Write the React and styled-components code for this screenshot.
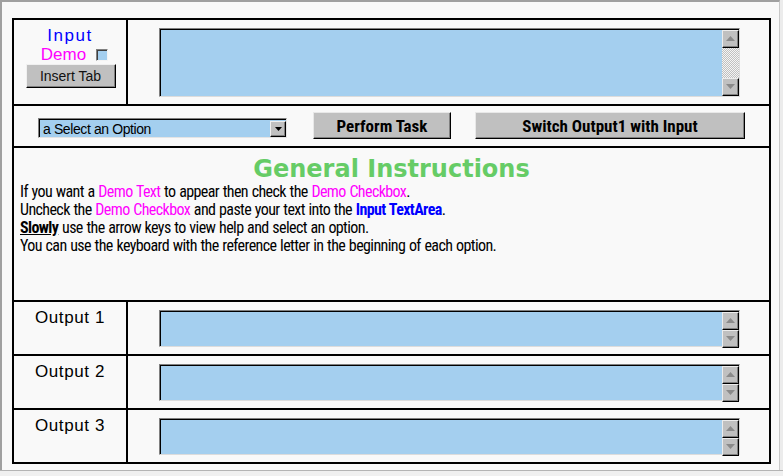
import styled, { createGlobalStyle } from 'styled-components';

const GlobalStyle = createGlobalStyle`
  html, body {
    margin: 0;
    padding: 0;
    background: #f9f9f9;
  }
  body {
    font-family: "Liberation Sans", Arial, sans-serif;
  }
`;

function Arrow({ up }) {
  return (
    <svg width="9" height="5" viewBox="0 0 9 5">
      <path d={up ? 'M4.5 0 L9 5 L0 5 Z' : 'M0 0 L9 0 L4.5 5 Z'} fill="#8a8a8a" />
    </svg>
  );
}

function FieldBox({ height, track }) {
  return (
    <TextBox $h={height}>
      <TextInput readOnly />
      <ScrollBar>
        <ScrollButton>
          <Arrow up />
        </ScrollButton>
        <Track $checker={track} />
        <ScrollButton>
          <Arrow />
        </ScrollButton>
      </ScrollBar>
    </TextBox>
  );
}

export default function App() {
  return (
    <>
      <GlobalStyle />
      <Window>
        <Viewport>
          <Sheet>
            <Row $h={86} $split>
              <LabelCell>
                <InputTitle>Input</InputTitle>
                <DemoLine>
                  Demo <CheckBox />
                </DemoLine>
                <SmallButton>Insert Tab</SmallButton>
              </LabelCell>
              <FieldCell>
                <FieldBox height={69} track />
              </FieldCell>
            </Row>

            <ControlRow>
              <SelectBox>
                <span>a Select an Option</span>
                <DropButton>
                  <svg width="7" height="4" viewBox="0 0 7 4">
                    <path d="M0 0 L7 0 L3.5 4 Z" fill="#000" />
                  </svg>
                </DropButton>
              </SelectBox>
              <TaskButton $w={138}>Perform Task</TaskButton>
              <TaskButton $w={270}>Switch Output1 with Input</TaskButton>
            </ControlRow>

            <InstructionRow>
              <Heading>General Instructions</Heading>
              <Help>
                <p>
                  If you want a <Pink>Demo Text</Pink> to appear then check the <Pink>Demo Checkbox</Pink>.
                </p>
                <p>
                  Uncheck the <Pink>Demo Checkbox</Pink> and paste your text into the <Blue>Input TextArea</Blue>.
                </p>
                <p>
                  <Strong>Slowly</Strong> use the arrow keys to view help and select an option.
                </p>
                <p>You can use the keyboard with the reference letter in the beginning of each option.</p>
              </Help>
            </InstructionRow>

            {[1, 2, 3].map((n) => (
              <Row key={n} $h={n === 3 ? 52 : 54} $split $last={n === 3}>
                <LabelCell>
                  <OutputLabel>Output {n}</OutputLabel>
                </LabelCell>
                <FieldCell>
                  <FieldBox height={37} />
                </FieldCell>
              </Row>
            ))}
          </Sheet>
        </Viewport>
        <StatusStrip />
      </Window>
    </>
  );
}

const narrow = `"Roboto Condensed", "DejaVu Sans Condensed", "Liberation Sans", Arial, sans-serif`;

const Window = styled.div`
  width: 783px;
  height: 476px;
  display: flex;
  flex-direction: column;
  background: #ececec;
  overflow: hidden;
`;

const Viewport = styled.div`
  height: 470px;
  width: 780px;
  box-sizing: border-box;
  background: #f9f9f9;
  border-top: 2px solid #a0a0a0;
  border-left: 2px solid #a0a0a0;
  border-right: 1px solid #c8c8c8;
  padding: 16px 0 0 10px;
`;

const StatusStrip = styled.div`
  height: 6px;
  box-sizing: border-box;
  border-top: 1px solid #b4b4b4;
  background: #f0f0f0;
`;

const Sheet = styled.div`
  width: 759px;
  height: 446px;
  box-sizing: border-box;
  border: 2px solid #000;
  display: flex;
  flex-direction: column;
`;

const Row = styled.div`
  display: grid;
  grid-template-columns: ${({ $split }) => ($split ? '114px 1fr' : '1fr')};
  height: ${({ $h }) => $h}px;
  flex: none;
  box-sizing: border-box;
  border-bottom: ${({ $last }) => ($last ? 'none' : '2px solid #000')};
`;

const LabelCell = styled.div`
  border-right: 2px solid #000;
  display: flex;
  flex-direction: column;
  align-items: center;
`;

const FieldCell = styled.div`
  display: flex;
  align-items: center;
  justify-content: center;
  padding-left: 1px;
`;

const InputTitle = styled.div`
  margin-top: 6px;
  font-size: 17px;
  line-height: 19px;
  letter-spacing: 1.5px;
  color: #0000ff;
`;

const DemoLine = styled.div`
  display: flex;
  align-items: center;
  gap: 10px;
  font-size: 17px;
  line-height: 19px;
  color: #ff00ff;
  margin-left: 9px;
`;

const CheckBox = styled.span`
  width: 12px;
  height: 12px;
  box-sizing: border-box;
  background: #a4cfef;
  border-top: 1px solid #808080;
  border-left: 1px solid #808080;
  border-right: 1px solid #f4f4f4;
  border-bottom: 1px solid #f4f4f4;
  box-shadow: inset 1px 1px 0 #404040;
`;

const SmallButton = styled.button`
  margin-top: 0;
  margin-left: 1px;
  width: 90px;
  height: 24px;
  padding: 0;
  background: #c0c0c0;
  border: 1px solid;
  border-color: #f0f0f0 #000 #000 #f0f0f0;
  box-shadow: inset -1px -1px 0 #808080;
  font-family: "Liberation Sans", Arial, sans-serif;
  font-size: 14px;
  color: #111;
`;

const TextBox = styled.div`
  width: 581px;
  height: ${({ $h }) => $h}px;
  box-sizing: border-box;
  display: flex;
  border-top: 1px solid #808080;
  border-left: 1px solid #808080;
  border-right: 1px solid #dcdcdc;
  border-bottom: 1px solid #dcdcdc;
  box-shadow: inset 1px 1px 0 #000;
  background: #a4cfef;
`;

const TextInput = styled.textarea`
  flex: 1;
  border: none;
  margin: 1px 0 0 1px;
  background: transparent;
  resize: none;
  outline: none;
  overflow: hidden;
`;

const ScrollBar = styled.div`
  width: 17px;
  display: flex;
  flex-direction: column;
  margin-top: 1px;
`;

const ScrollButton = styled.div`
  height: 18px;
  box-sizing: border-box;
  display: flex;
  align-items: center;
  justify-content: center;
  background: #c0c0c0;
  border: 1px solid;
  border-color: #ececec #000 #000 #ececec;
  box-shadow: inset -1px -1px 0 #808080;
  flex: none;
`;

const Track = styled.div`
  flex: 1;
  background: ${({ $checker }) =>
    $checker ? 'repeating-conic-gradient(#c0c0c0 0 25%, #f4f4f4 0 50%) 0 0 / 2px 2px' : 'transparent'};
`;

const ControlRow = styled.div`
  height: 42px;
  flex: none;
  box-sizing: border-box;
  border-bottom: 2px solid #000;
  display: flex;
  align-items: flex-start;
  padding: 6px 24px 0;
`;

const SelectBox = styled.div`
  width: 249px;
  height: 20px;
  margin-top: 6px;
  margin-right: 26px;
  box-sizing: border-box;
  display: flex;
  align-items: center;
  justify-content: space-between;
  background: #a4cfef;
  border-top: 1px solid #808080;
  border-left: 1px solid #808080;
  border-right: 1px solid #e4e4e4;
  border-bottom: 1px solid #e4e4e4;
  box-shadow: inset 1px 1px 0 #000;
  font-size: 14px;
  letter-spacing: -0.4px;
  color: #000;
  padding-left: 4px;

  & > span {
    margin-top: 1px;
  }
`;

const DropButton = styled.span`
  width: 16px;
  height: 16px;
  margin-top: 1px;
  box-sizing: border-box;
  display: flex;
  align-items: center;
  justify-content: center;
  background: #c0c0c0;
  border: 1px solid;
  border-color: #f0f0f0 #000 #000 #f0f0f0;
  box-shadow: inset -1px -1px 0 #808080;
`;

const TaskButton = styled.button`
  width: ${({ $w }) => $w}px;
  height: 27px;
  margin-right: 24px;
  padding: 0;
  background: #c0c0c0;
  border: 1px solid;
  border-color: #e8e8e8 #000 #000 #e8e8e8;
  box-shadow: inset -1px -1px 0 #808080;
  font-family: ${narrow};
  font-weight: bold;
  font-size: 17px;
  color: #000;

  &:last-child {
    margin-right: 0;
  }
`;

const InstructionRow = styled.div`
  height: 154px;
  flex: none;
  box-sizing: border-box;
  border-bottom: 2px solid #000;
  padding: 7px 6px 0;
`;

const Heading = styled.h1`
  margin: 0;
  text-align: center;
  font-family: "DejaVu Sans", Verdana, sans-serif;
  font-weight: bold;
  font-size: 24px;
  line-height: 28px;
  color: #66cc66;
`;

const Help = styled.div`
  font-family: ${narrow};
  font-size: 16px;
  line-height: 18px;
  letter-spacing: -0.6px;
  word-spacing: 0.6px;
  color: #000;

  & p {
    margin: 0;
  }
`;

const Pink = styled.span`
  color: #ff00ff;
`;

const Blue = styled.span`
  color: #0000ff;
  font-weight: bold;
`;

const Strong = styled.span`
  font-weight: bold;
  text-decoration: underline;
`;

const OutputLabel = styled.div`
  margin-top: 6px;
  font-size: 17px;
  line-height: 19px;
  letter-spacing: 0.6px;
  color: #000;
`;
